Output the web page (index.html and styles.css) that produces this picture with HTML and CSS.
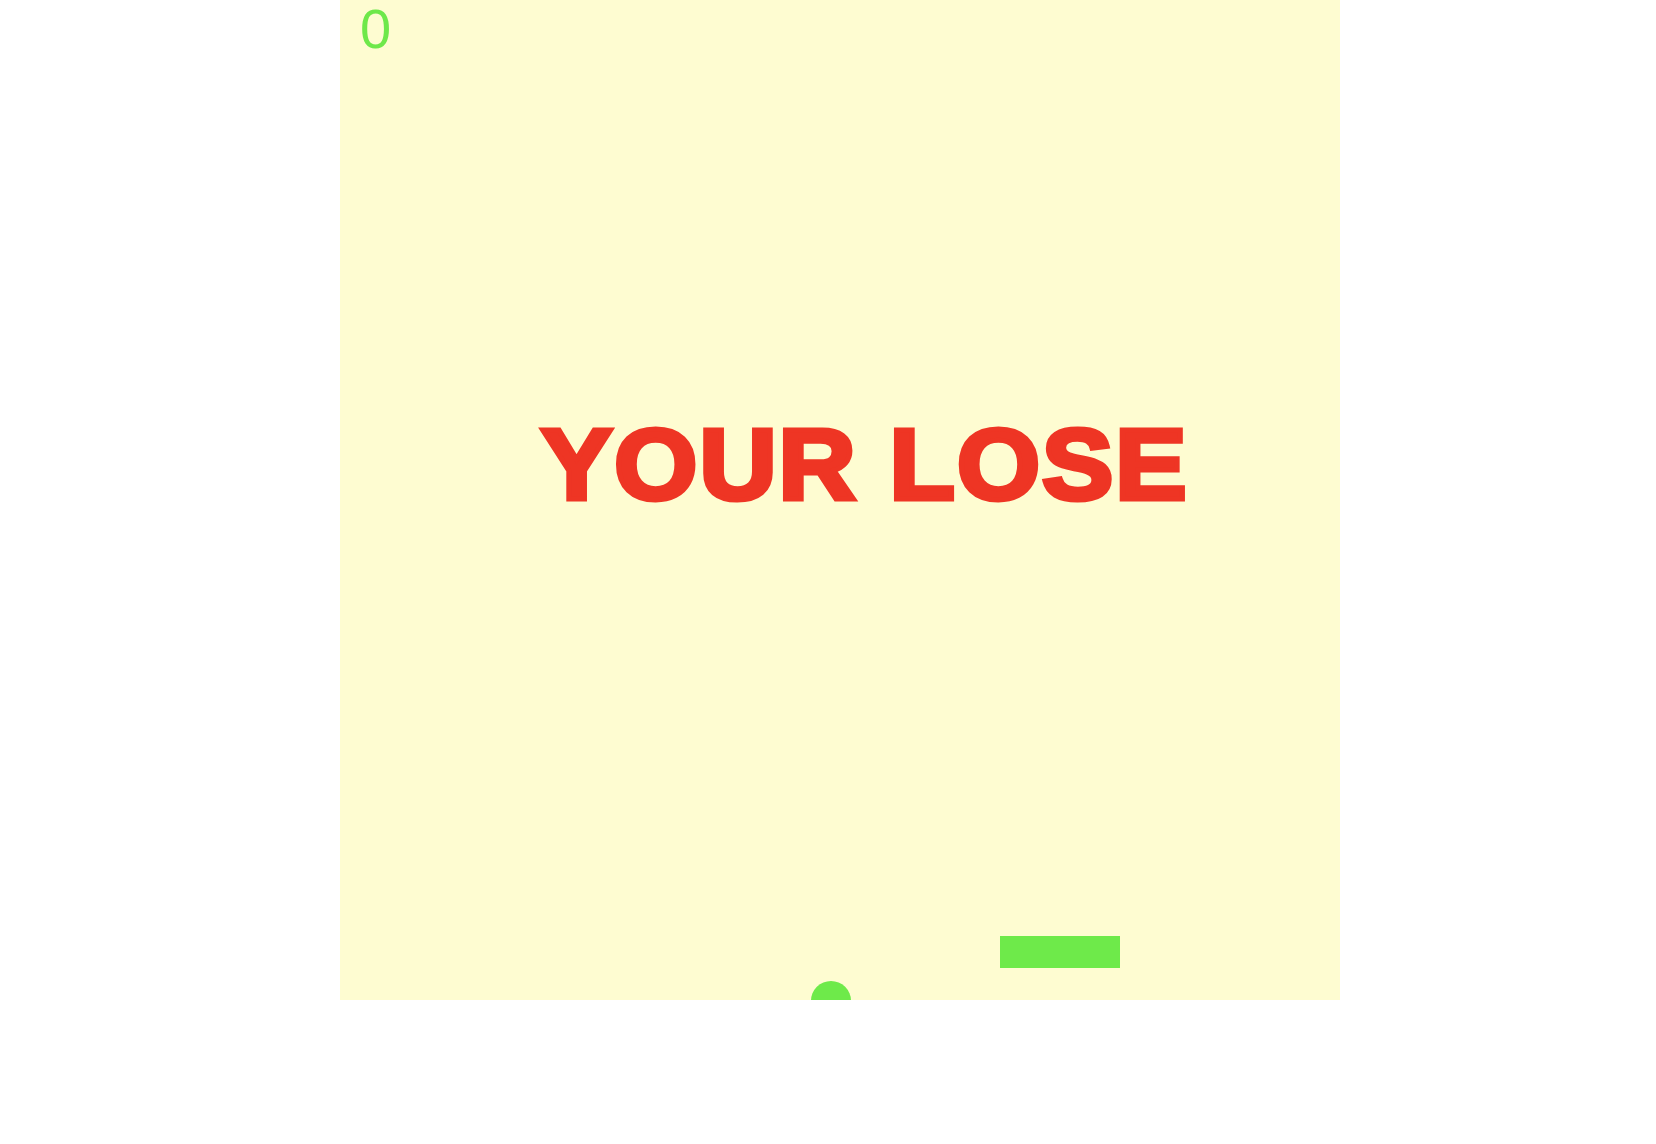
FILE: index.html
```html
<!DOCTYPE html>
<html>
<head>
<meta charset="utf-8">
<link rel="stylesheet" href="styles.css">
</head>
<body>
<div class="board">
  <div class="score">0</div>
  <div class="message">YOUR LOSE</div>
  <div class="paddle"></div>
  <div class="ball"></div>
</div>
</body>
</html>
```
FILE: styles.css
```css
html, body {
  margin: 0;
  padding: 0;
  background: #ffffff;
}
.board {
  position: relative;
  width: 1000px;
  height: 1000px;
  margin-left: 340px;
  background: #fefcd1;
  overflow: hidden;
}
.score {
  position: absolute;
  left: 20px;
  top: 0;
  font-family: "Liberation Sans", Arial, sans-serif;
  font-size: 56px;
  line-height: 58px;
  color: #6ee84a;
}
.message {
  position: absolute;
  left: 201px;
  top: 414px;
  font-family: "Liberation Sans", Arial, sans-serif;
  font-weight: 700;
  font-size: 100px;
  line-height: 100px;
  letter-spacing: 2px;
  color: #ee3524;
  -webkit-text-stroke: 5px #ee3524;
  white-space: nowrap;
  transform: scaleX(1.067);
  transform-origin: left center;
}
.paddle {
  position: absolute;
  left: 660px;
  top: 936px;
  width: 120px;
  height: 32px;
  background: #6eea4a;
}
.ball {
  position: absolute;
  left: 471px;
  top: 981px;
  width: 40px;
  height: 40px;
  border-radius: 50%;
  background: #6eea4a;
}
```
